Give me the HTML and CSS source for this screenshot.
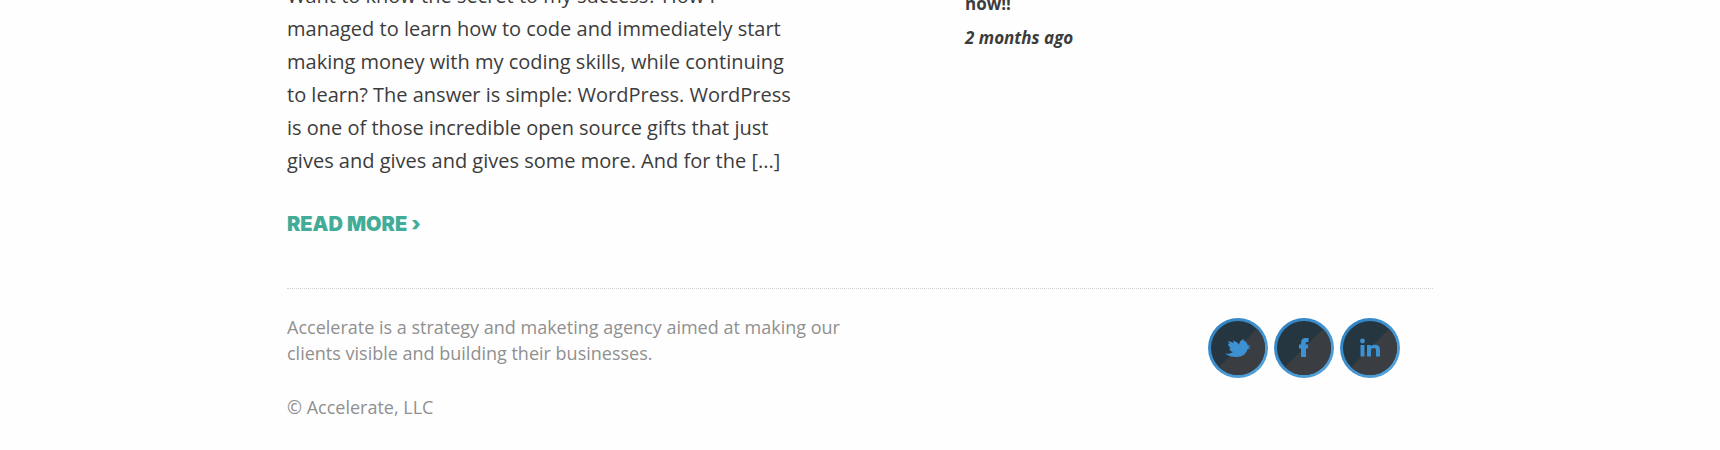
FILE: index.html
```html
<!DOCTYPE html>
<html lang="en">
<head>
<meta charset="utf-8">
<title>Accelerate</title>
<link rel="stylesheet" href="styles.css">
</head>
<body>
<div class="page">
  <main class="columns">
    <article class="post">
      <p class="excerpt">Want to know the secret to my success? How I<br>managed to learn how to code and immediately start<br>making money with my coding skills, while continuing<br>to learn? The answer is simple: WordPress. WordPress<br>is one of those incredible open source gifts that just<br>gives and gives and gives some more. And for the [...]</p>
      <a class="read-more" href="#">READ MORE ›</a>
    </article>
    <aside class="tweet">
      <p class="tweet-text">now!!</p>
      <p class="tweet-time">2 months ago</p>
    </aside>
  </main>
  <footer class="footer">
    <div class="about">
      <p>Accelerate is a strategy and maketing agency aimed at making our<br>clients visible and building their businesses.</p>
      <p>© Accelerate, LLC</p>
    </div>
    <nav class="social" aria-label="Social links">
      <a class="badge" href="#" aria-label="Twitter">
        <svg viewBox="3 3 54 54"><path class="shine" d="M60 0V60H0Z"/><path class="mark" d="M17 35.500C20 36.200 23 35.500 25 34C23 33.500 21.500 32 21 30.500H23C21 29 20 27.300 20 25.500L22 26C20.500 24.500 20.300 23.500 20.500 23L26 25L25 22.500C28 23.500 30 25 31 26.500C31.500 23.500 33.500 21.500 36 21L35.500 22.500C38 23 39.500 25.500 39.500 27L43 28L40 29L42.500 30.500L39.500 31C38.500 36 34 39 28.500 39C24 39 20 38 17 35.500Z"/></svg>
      </a>
      <a class="badge" href="#" aria-label="Facebook">
        <svg viewBox="3 3 54 54"><path class="shine" d="M60 0V60H0Z"/><path class="mark" d="M27 39V30.500H25V26.500H27V25.500C27 21.700 28.500 20 31.500 20H34.500V24H33C32 24 31.700 24.500 31.700 25.500V26.500H34.300L33.800 30.500H32V39Z"/></svg>
      </a>
      <a class="badge" href="#" aria-label="LinkedIn">
        <svg viewBox="3 3 54 54"><path class="shine" d="M60 0V60H0Z"/><circle class="mark" cx="22.500" cy="23" r="2.400"/><path class="mark" d="M20.500 27H24.500V38.500H20.500ZM27 27H30.800V28.300C32 27 33.200 26.700 35 26.700C38.500 26.700 40 28.800 40 32V38.500H36V32.500C36 30.700 35.300 30 33.700 30C31.800 30 31 31 31 32.800V38.500H27Z"/></svg>
      </a>
    </nav>
  </footer>
</div>
</body>
</html>
```
FILE: styles.css
```css
* {
  box-sizing: border-box;
}

body {
  margin: 0;
  overflow: hidden;
  background: #fefefe;
  color: #3c3c3c;
  font-family: "Open Sans", "Noto Sans", sans-serif;
}

p {
  margin: 0;
}

a {
  text-decoration: none;
}

.page {
  width: 90%;
  max-width: 1146px;
  margin: 0 auto;
}

.columns {
  display: grid;
  grid-template-columns: 542px 1fr;
  column-gap: 136px;
  margin-top: -21px;
}

.excerpt {
  font-size: 20px;
  line-height: 33px;
}

.read-more {
  display: inline-block;
  margin-top: 35px;
  color: #43ac98;
  font-family: Inter, "Open Sans", sans-serif;
  font-size: 20px;
  font-weight: 900;
  line-height: 24px;
}

.tweet {
  padding-top: 12px;
  font-size: 17px;
  font-weight: 700;
  line-height: 26px;
}

.tweet-time {
  margin-top: 8px;
  font-style: italic;
}

.footer {
  display: flex;
  justify-content: space-between;
  align-items: flex-start;
  margin-top: 52px;
  padding-top: 25px;
  border-top: 1px dotted #d0d0d0;
}

.about {
  display: grid;
  row-gap: 28px;
  color: #909090;
  font-size: 18px;
  line-height: 26px;
}

.social {
  display: flex;
  gap: 6px;
  margin-top: 4px;
  padding-right: 33px;
}

.badge {
  width: 60px;
  height: 60px;
  padding: 3px;
  border-radius: 50%;
  background: linear-gradient(135deg, #2b7fc2, #58a6dc);
}

.badge svg {
  display: block;
  width: 100%;
  border-radius: 50%;
  background: #263640;
}

.shine {
  fill: #3a3d41;
}

.mark {
  fill: #3c91d2;
}
```
